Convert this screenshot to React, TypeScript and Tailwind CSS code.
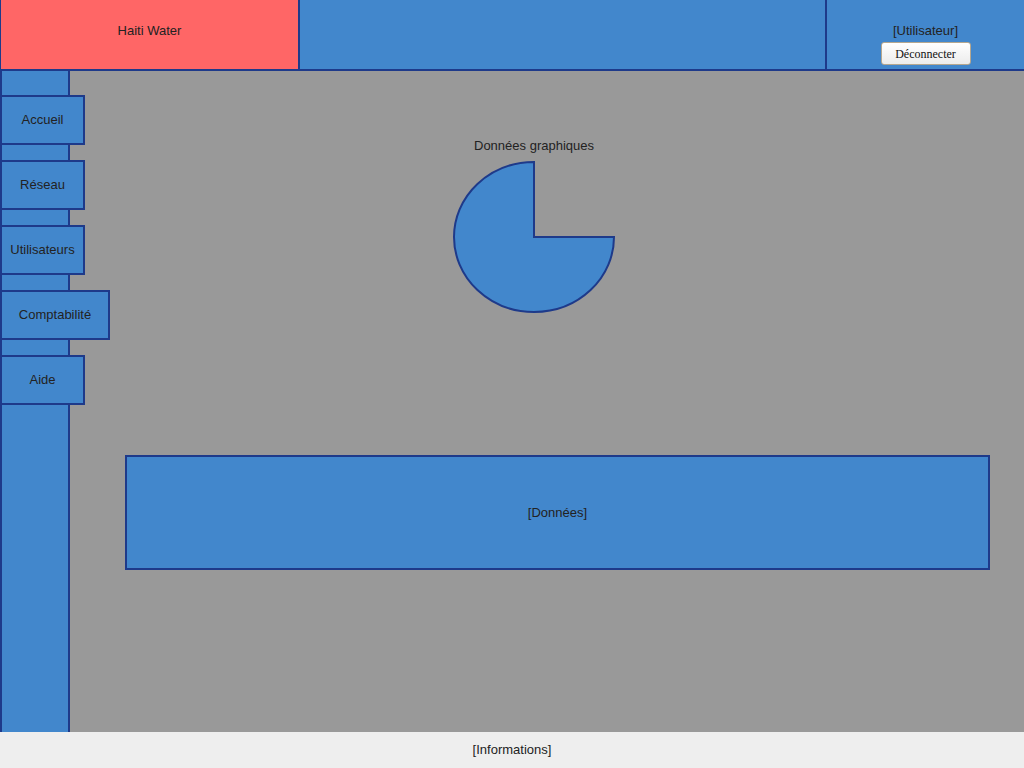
import React from "react";

const navItems = [
  { label: "Accueil", w: "w-[85px]" },
  { label: "Réseau", w: "w-[85px]" },
  { label: "Utilisateurs", w: "w-[85px]" },
  { label: "Comptabilité", w: "w-[110px]" },
  { label: "Aide", w: "w-[85px]" },
];

export default function App() {
  return (
    <div
      className="w-[1024px] h-[768px] flex flex-col bg-[#999999] text-[13px] text-[#222222] overflow-hidden"
      style={{ fontFamily: '"Liberation Sans", Arial, sans-serif' }}
    >
      {/* Header */}
      <header className="flex h-[71px] shrink-0 border-b-2 border-[#1e3a8a]">
        <div className="w-[300px] bg-[#ff6666] border-l border-r-2 border-[#1e3a8a] flex justify-center pt-[21px]">
          <span>Haiti Water</span>
        </div>
        <div className="w-[527px] bg-[#4287cc] border-r-2 border-[#1e3a8a]" />
        <div className="flex-1 bg-[#4287cc] flex flex-col items-center pt-[23px]">
          <span className="leading-[16px]">[Utilisateur]</span>
          <button
            className="mt-[3px] w-[90px] h-[23px] rounded-[3px] border border-[#b5a78f] bg-gradient-to-b from-white to-[#ececec] text-[12px] text-[#111] leading-none"
            style={{ fontFamily: '"Liberation Serif", "Times New Roman", serif' }}
          >
            Déconnecter
          </button>
        </div>
      </header>

      {/* Body */}
      <div className="flex flex-1 min-h-0">
        <nav className="w-[70px] shrink-0 bg-[#4287cc] border-x-2 border-[#1e3a8a] flex flex-col gap-[15px] pt-[24px] overflow-visible z-10">
          {navItems.map((item) => (
            <div
              key={item.label}
              className={`${item.w} h-[50px] -ml-[2px] shrink-0 bg-[#4287cc] border-2 border-[#1e3a8a] flex items-center justify-center`}
            >
              {item.label}
            </div>
          ))}
        </nav>

        <main className="flex-1 flex flex-col">
          <div className="pl-[383px] pt-[67px] flex flex-col items-start">
            <div className="w-[162px] flex flex-col items-center">
              <span className="leading-[16px] whitespace-nowrap">Données graphiques</span>
              <svg width="162" height="154" viewBox="0 0 162 154" className="mt-[6px]">
                <path
                  d="M81 77 L81 2 A80 75 0 1 0 161 77 Z"
                  fill="#4287cc"
                  stroke="#1e3a8a"
                  strokeWidth="2"
                />
              </svg>
            </div>
          </div>
          <div className="ml-[55px] mt-[141px] w-[865px] h-[115px] bg-[#4287cc] border-2 border-[#1e3a8a] flex items-center justify-center">
            [Données]
          </div>
        </main>
      </div>

      {/* Footer */}
      <footer className="h-[36px] shrink-0 bg-[#eeeeee] flex items-center justify-center">
        [Informations]
      </footer>
    </div>
  );
}
